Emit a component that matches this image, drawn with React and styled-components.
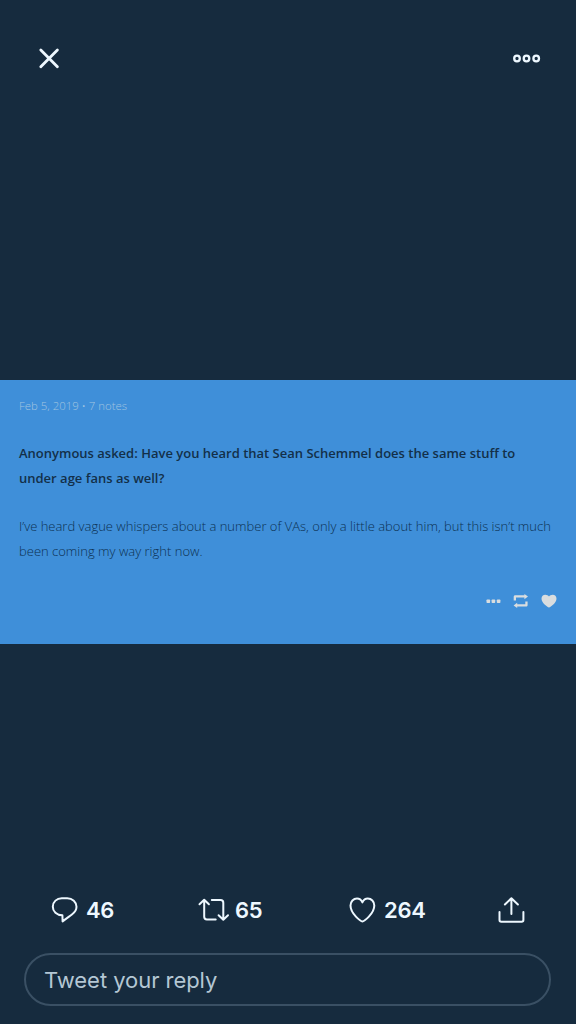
import React from 'react';
import styled, { createGlobalStyle } from 'styled-components';

const GlobalStyle = createGlobalStyle`
    * {
        box-sizing: border-box;
    }
    body {
        margin: 0;
        background: #162b3e;
    }
    button {
        padding: 0;
        border: 0;
        background: none;
        color: inherit;
        font: inherit;
    }
    svg {
        display: block;
        flex: none;
    }
`;

// styled-components
const Viewer = styled.div`
    display: flex;
    flex-direction: column;
    width: 576px;
    height: 1024px;
    overflow: hidden;
    background: #162b3e;
    color: #eef8ff;
    font-family: Inter, 'Liberation Sans', sans-serif;
`;

const TopBar = styled.header`
    display: flex;
    align-items: center;
    justify-content: space-between;
    height: 117px;
    padding: 0 35px 0 38px;
`;

const PhotoArea = styled.main`
    flex: 1;
    padding-top: 263px;
`;

const AskCard = styled.article`
    height: 264px;
    padding: 14px 19px 0;
    background: #3f8fd9;
    font-family: 'Open Sans', sans-serif;
    white-space: nowrap;
`;

const PostMeta = styled.div`
    height: 47px;
    color: #a0c4e0;
    font-size: 11.4px;
    font-weight: 300;
    line-height: 24px;
`;

const Question = styled.div`
    height: 73px;
    color: #132f49;
    font-size: 13px;
    font-weight: 600;
    line-height: 24.5px;
`;

const Answer = styled.div`
    height: 73px;
    color: #0d3152;
    font-size: 13px;
    font-weight: 300;
    line-height: 24.5px;
`;

const Line = styled.span`
    display: block;
`;

const PostTools = styled.div`
    display: flex;
    align-items: center;
    justify-content: flex-end;
    gap: 12px;
    height: 28px;
    color: #d9dddf;
`;

const ActionBar = styled.div`
    display: grid;
    grid-template-columns: 147px 151px 149px 30px;
    align-items: center;
    height: 40px;
    padding-left: 51px;
    margin-bottom: 23px;
`;

const Action = styled.button`
    display: flex;
    align-items: center;
    gap: ${({ $gap }) => $gap || '7px'};
`;

const Count = styled.span`
    font-size: 22px;
    font-weight: 600;
    line-height: 28px;
    letter-spacing: -0.3px;
`;

const ReplyBox = styled.div`
    display: flex;
    align-items: center;
    height: 53px;
    margin: 0 25px 18px 24px;
    padding: 0 0 0 18px;
    border: 2px solid #3a5064;
    border-radius: 27px;
    color: #b4c7d4;
    font-size: 22px;
    letter-spacing: -0.05px;
`;

const strokeProps = {
    fill: 'none',
    stroke: 'currentColor',
    strokeLinecap: 'round',
    strokeLinejoin: 'round',
};

const CloseIcon = () => (
    <svg width="22" height="22" viewBox="0 0 22 22" {...strokeProps} strokeWidth="2.8">
        <path d="M2.8 2 19.4 18.8M19.4 2 2.8 18.8" />
    </svg>
);

const MoreIcon = () => (
    <svg width="29" height="10" viewBox="0 0 29 10" {...strokeProps} strokeWidth="2.3">
        <circle cx="5" cy="4.5" r="2.8" />
        <circle cx="14.5" cy="4.5" r="2.8" />
        <circle cx="24.2" cy="4.5" r="2.8" />
    </svg>
);

const ReplyIcon = () => (
    <svg width="28" height="28" viewBox="0 0 28 28" {...strokeProps} strokeWidth="2">
        <path d="M11.4 19.2C5.6 19 1.8 15.4 1.8 10.7 1.8 5.8 5.8 2.2 10.8 2.2h5.4c5.2 0 9.3 3.8 9.3 8.6 0 3.2-1.8 5.7-4.6 7.7-2.8 2.1-6 4.3-9.3 6.9z" />
    </svg>
);

const RetweetIcon = () => (
    <svg width="32" height="28" viewBox="0 0 32 28" {...strokeProps} strokeWidth="2">
        <path d="M1.5 8.3 6.2 3.8l4.7 4.5M6.2 4.3v16.5c0 1.9.8 2.7 2.7 2.7h8.8" />
        <path d="M13.8 4h8.8c1.9 0 2.7.8 2.7 2.7V23.5M20.6 19.2l4.7 4.5 4.7-4.5" />
    </svg>
);

const HeartIcon = () => (
    <svg width="28" height="28" viewBox="0 0 28 28" {...strokeProps} strokeWidth="2">
        <path d="M13.4 25.4C12 25.4 1.5 18 1.5 9.6 1.5 5.3 4.5 2.6 8 2.6c2.5 0 4.3 1.5 5.4 3.8 1.1-2.3 2.9-3.8 5.4-3.8 3.5 0 6.5 2.7 6.5 7 0 8.4-10.5 15.8-11.9 15.8z" />
    </svg>
);

const ShareIcon = () => (
    <svg width="28" height="28" viewBox="0 0 28 28" {...strokeProps} strokeWidth="2">
        <path d="M13.4 18V2.2M6.9 8.5l6.5-6.3 6.5 6.3M1.5 16v8c0 1.2.6 1.7 1.8 1.7h20.3c1.2 0 1.8-.5 1.8-1.7v-8" />
    </svg>
);

const PostMoreIcon = () => (
    <svg width="15" height="14" viewBox="0 0 15 14" fill="currentColor">
        <rect x="0.5" y="5.6" width="3.6" height="3.4" rx="0.7" />
        <rect x="5.6" y="5.6" width="3.6" height="3.4" rx="0.7" />
        <rect x="10.8" y="5.6" width="3.6" height="3.4" rx="0.7" />
    </svg>
);

const ReblogIcon = () => (
    <svg width="16" height="14" viewBox="0 0 16 14" fill="currentColor">
        <path d="M.7 6.4V3C.7 1.9 1.3 1.3 2.4 1.3h9V0L15 2.6 11.4 5.3V3.6H3v2.8z" />
        <path d="M14.6 7.4v3.5c0 1.1-.6 1.7-1.7 1.7H4.2V14L.6 11.4 4.2 8.7v1.6h8.1V7.4z" />
    </svg>
);

const LikeIcon = () => (
    <svg width="16" height="14" viewBox="0 0 16 14" fill="currentColor">
        <path d="M8 13.6C6.3 13 .5 9 .5 4.8.5 2.3 2.2.8 4.2.8 6 .8 7.2 1.5 8 2.6 8.8 1.5 10 .8 11.8.8c2 0 3.7 1.5 3.7 4 0 4.2-5.8 8.2-7.5 8.8z" />
    </svg>
);

const App = () => {
    return (
        <>
            <GlobalStyle />
            <Viewer>
                <TopBar>
                    <button aria-label="Close"><CloseIcon /></button>
                    <button aria-label="More"><MoreIcon /></button>
                </TopBar>
                <PhotoArea>
                    <AskCard>
                        <PostMeta>Feb 5, 2019 • 7 notes</PostMeta>
                        <Question>
                            <Line>Anonymous asked: Have you heard that Sean Schemmel does the same stuff to</Line>
                            <Line>under age fans as well?</Line>
                        </Question>
                        <Answer>
                            <Line>I’ve heard vague whispers about a number of VAs, only a little about him, but this isn’t much</Line>
                            <Line>been coming my way right now.</Line>
                        </Answer>
                        <PostTools>
                            <PostMoreIcon />
                            <ReblogIcon />
                            <LikeIcon />
                        </PostTools>
                    </AskCard>
                </PhotoArea>
                <ActionBar>
                    <Action><ReplyIcon /><Count>46</Count></Action>
                    <Action $gap="5px"><RetweetIcon /><Count>65</Count></Action>
                    <Action><HeartIcon /><Count>264</Count></Action>
                    <Action aria-label="Share"><ShareIcon /></Action>
                </ActionBar>
                <ReplyBox>Tweet your reply</ReplyBox>
            </Viewer>
        </>
    );
};

export default App;
